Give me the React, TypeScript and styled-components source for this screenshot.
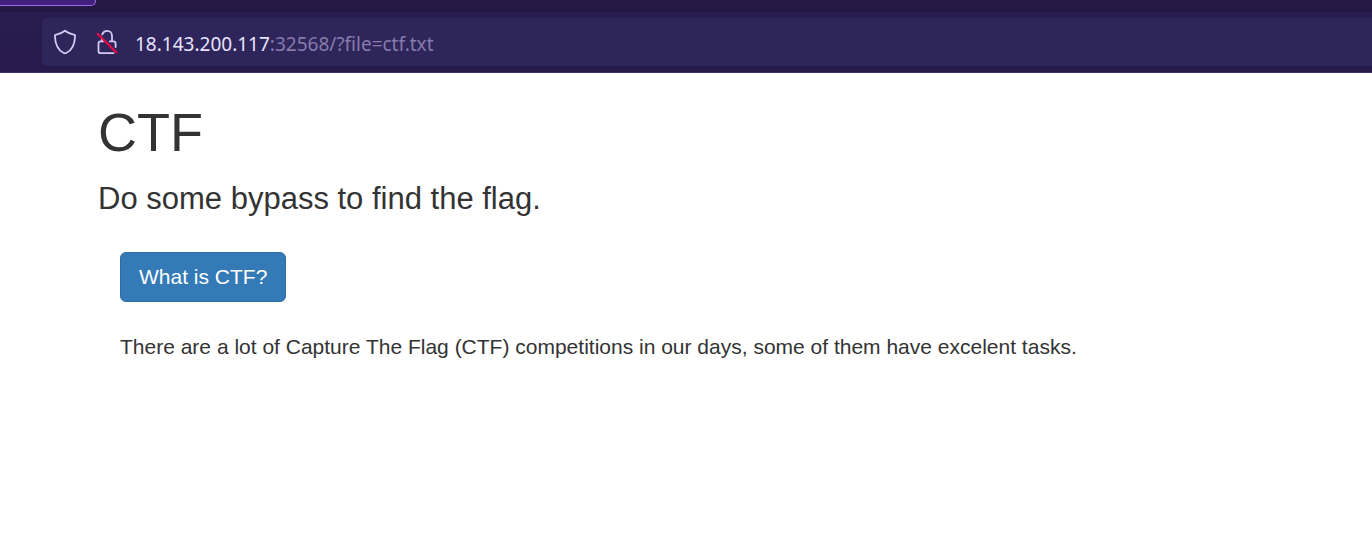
import React from "react";
import styled, { createGlobalStyle } from "styled-components";

const GlobalStyle = createGlobalStyle`
  *, *::before, *::after { box-sizing: border-box; }
  body {
    margin: 0;
    background: #fff;
    color: #333;
    font-family: "Liberation Sans", Arial, sans-serif;
    font-size: 21px;
    line-height: 30px;
  }
`;

const TabStrip = styled.div`
  height: 12px;
  background: #251843;
`;

const ActiveTab = styled.div`
  width: 96px;
  height: 6px;
  background: #41217d;
  border: solid #9a6bea;
  border-width: 0 1px 1px 0;
  border-bottom-right-radius: 5px;
`;

const NavBar = styled.div`
  padding: 6px 0 6px 42px;
  background: linear-gradient(#281d4f, #281a4b);
  border-bottom: 1px solid #3d2c78;
`;

const AddressBar = styled.form`
  display: flex;
  align-items: center;
  height: 48px;
  padding-left: 11px;
  background: #2e255b;
  border-radius: 5px 0 0 5px;
`;

const IconButton = styled.button`
  display: flex;
  width: 24px;
  height: 28px;
  margin-right: 18px;
  padding: 0;
  background: none;
  border: 0;
`;

const Address = styled.div`
  display: flex;
  margin-left: -2px;
  padding-top: 3px;
`;

const AddressInput = styled.input<{ $muted?: boolean }>`
  field-sizing: content;
  height: 32px;
  padding: 0;
  background: none;
  border: 0;
  outline: 0;
  color: ${({ $muted }) => ($muted ? "#887bab" : "#e9e3ff")};
  font: 19px/32px "Segoe UI", "Noto Sans", sans-serif;
`;

const Page = styled.main`
  padding: 29px 98px;
`;

const Title = styled.h1`
  margin: 0 0 15px;
  font-size: 54px;
  font-weight: 400;
  line-height: 60px;
`;

const Lead = styled.p`
  margin: 0 0 31px;
  font-size: 31px;
  line-height: 44px;
`;

const Section = styled.section`
  padding: 0 22px;
`;

const PrimaryButton = styled.button`
  height: 50px;
  margin-bottom: 30px;
  padding: 0 18px;
  background: #337ab7;
  border: 1px solid #2e6da4;
  border-radius: 6px;
  color: #fff;
  font: inherit;
`;

const Text = styled.p`
  margin: 0;
`;

function ShieldIcon() {
  return (
    <svg width="24" height="28" viewBox="0 0 24 28" fill="none" stroke="#d5caf4" strokeWidth="1.8" strokeLinejoin="round" aria-hidden="true">
      <path d="M12 2.8C9.2 5 5.8 6.3 2.6 6.9C2 7 1.8 7.4 1.9 8C2.2 16.3 4.1 22 10.8 25Q12 25.5 13.2 25C19.9 22 21.8 16.3 22.1 8C22.2 7.4 22 7 21.4 6.9C18.2 6.3 14.8 5 12 2.8Z" />
    </svg>
  );
}

function InsecureIcon() {
  return (
    <svg width="24" height="28" viewBox="0 0 24 28" fill="none" aria-hidden="true">
      <g stroke="#d5caf4" strokeWidth="1.8" strokeLinecap="round">
        <path d="M7.2 6.4C8.2 4.1 9.9 2.9 12 2.9C15 2.9 17 5.1 17 8V13.2" />
        <path d="M7 11V13.3" />
        <path d="M14.8 13.4H18.5Q20.6 13.4 20.6 15.5V19" />
        <path d="M8 13.4H5.5Q3.5 13.4 3.5 15.5V23.1Q3.5 25.2 5.5 25.2H18.5" />
      </g>
      <path d="M2 5.2L22 25" stroke="#e80c43" strokeWidth="2.2" />
    </svg>
  );
}

export default function App() {
  return (
    <>
      <GlobalStyle />
      <header>
        <TabStrip>
          <ActiveTab />
        </TabStrip>
        <NavBar>
          <AddressBar>
            <IconButton type="button" aria-label="Tracking protection">
              <ShieldIcon />
            </IconButton>
            <IconButton type="button" aria-label="Connection not secure">
              <InsecureIcon />
            </IconButton>
            <Address>
              <AddressInput aria-label="Host" defaultValue="18.143.200.117" />
              <AddressInput aria-label="Port and path" defaultValue=":32568/?file=ctf.txt" $muted />
            </Address>
          </AddressBar>
        </NavBar>
      </header>
      <Page>
        <Title>CTF</Title>
        <Lead>Do some bypass to find the flag.</Lead>
        <Section>
          <PrimaryButton type="button">What is CTF?</PrimaryButton>
          <Text>There are a lot of Capture The Flag (CTF) competitions in our days, some of them have excelent tasks.</Text>
        </Section>
      </Page>
    </>
  );
}
